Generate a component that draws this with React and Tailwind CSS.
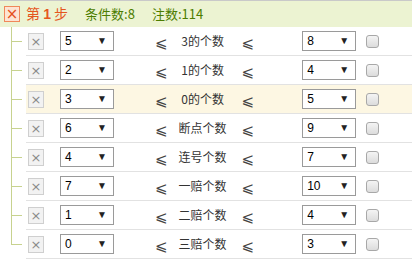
import React from 'react'

const rows = [
  { min: '5', label: '3的个数', max: '8' },
  { min: '2', label: '1的个数', max: '4' },
  { min: '3', label: '0的个数', max: '5', active: true },
  { min: '6', label: '断点个数', max: '9' },
  { min: '4', label: '连号个数', max: '7' },
  { min: '7', label: '一赔个数', max: '10' },
  { min: '1', label: '二赔个数', max: '4' },
  { min: '0', label: '三赔个数', max: '3' },
]

const Select = ({ value }) => (
  <div className="flex items-center justify-between w-[54px] h-[20px] border border-[#9a9a9a] bg-white pl-[4px] pr-[6px] text-[12px] text-black font-['Liberation_Sans',sans-serif]">
    <span>{value}</span>
    <span className="text-[10px] leading-none text-[#222]">▼</span>
  </div>
)

const Leq = () => (
  <span className="shrink-0 w-[12px] text-[15px] leading-none text-[#444] font-['DejaVu_Sans',sans-serif]">⩽</span>
)

const RowItem = ({ row, last }) => (
  <div className="flex h-[29px]">
    {/* tree branch */}
    <div className="relative w-[26px] shrink-0">
      <div className={`absolute left-[11px] top-0 w-px bg-[#c7d28f] ${last ? 'h-[15px]' : 'bottom-0'}`} />
      <div className="absolute left-[11px] top-[14px] w-[11px] h-px bg-[#c7d28f]" />
    </div>

    <div className={`flex flex-1 items-center border-b border-[#e2e2e2] ${row.active ? 'bg-[#fdf7e3]' : 'bg-white'}`}>
      <button className="shrink-0 ml-[2px] w-[16px] h-[17px] flex items-center justify-center border border-[#cfcfcf] bg-[#f2f2f2] text-[#8a8a8a] text-[13px] leading-none font-['DejaVu_Sans',sans-serif]">
        ×
      </button>
      <div className="shrink-0 ml-[16px]">
        <Select value={row.min} />
      </div>
      <div className="shrink-0 ml-[41px]">
        <Leq />
      </div>
      <span className="shrink-0 w-[64px] ml-[3px] text-center text-[12px] text-[#333] font-['Noto_Sans_CJK_SC',sans-serif]">
        {row.label}
      </span>
      <div className="shrink-0 ml-[7px]">
        <Leq />
      </div>
      <div className="shrink-0 ml-[48px]">
        <Select value={row.max} />
      </div>
      <span className="shrink-0 ml-[10px] w-[13px] h-[13px] rounded-[3px] border border-[#a8a8a8] bg-gradient-to-b from-[#f4f4f4] to-[#dcdcdc]" />
    </div>
  </div>
)

export default function App() {
  return (
    <div className="w-[412px] h-[259px] bg-white overflow-hidden font-['Noto_Sans_CJK_SC',sans-serif]">
      {/* header */}
      <div className="flex items-center h-[27px] border-t border-[#c9c9c9] bg-[#ecf3d2] pl-[4px]">
        <span className="flex items-center justify-center w-[16px] h-[16px] border border-[#f0885a] bg-[#fde3d3] text-[#e5501c] text-[15px] leading-none font-['DejaVu_Sans',sans-serif]">
          ×
        </span>
        <span className="ml-[6px] text-[14px] text-[#e5561e]">
          第 <span className="font-['Liberation_Sans',sans-serif] font-bold">1</span> 步
        </span>
        <span className="ml-[17px] text-[13px] text-[#4c7d00]">条件数:8</span>
        <span className="ml-[17px] text-[13px] text-[#4c7d00]">注数:114</span>
      </div>

      <div className="flex flex-col">
        {rows.map((row, i) => (
          <RowItem key={i} row={row} last={i === rows.length - 1} />
        ))}
      </div>
    </div>
  )
}
